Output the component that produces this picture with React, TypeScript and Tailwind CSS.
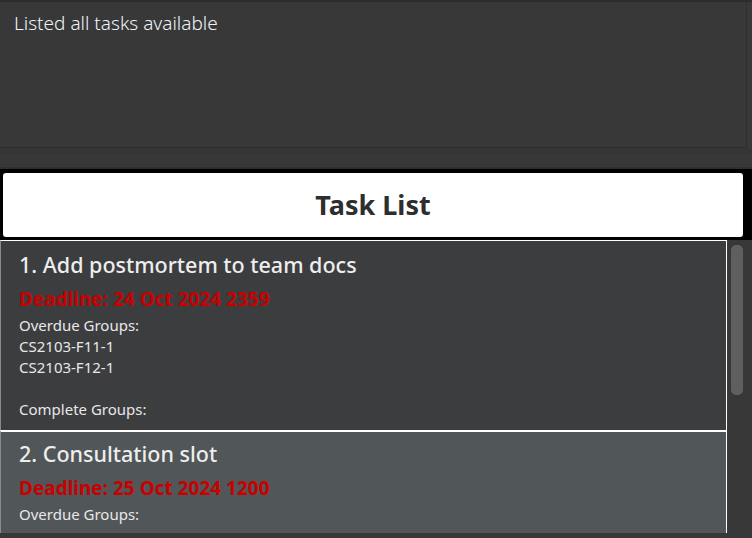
import React from 'react';

interface Task {
  title: string;
  deadline: string;
  overdue: string[];
  complete: string[];
}

const tasks: Task[] = [
  {
    title: '1. Add postmortem to team docs',
    deadline: 'Deadline: 24 Oct 2024 2359',
    overdue: ['CS2103-F11-1', 'CS2103-F12-1'],
    complete: [],
  },
  {
    title: '2. Consultation slot',
    deadline: 'Deadline: 25 Oct 2024 1200',
    overdue: [],
    complete: [],
  },
];

const font = { fontFamily: '"Noto Sans", "Open Sans", sans-serif' };

const TaskCard: React.FC<{ task: Task; odd: boolean }> = ({ task, odd }) => (
  <div
    className={
      odd
        ? 'h-[190px] shrink-0 overflow-hidden border-t border-r border-l border-white border-l-[#8a8a8a] bg-[#3c3d3f] pl-[18px] pt-[9px]'
        : 'h-[190px] shrink-0 overflow-hidden border-t-2 border-r border-l border-white border-l-[#8a8a8a] bg-[#515658] pl-[18px] pt-[7px]'
    }
  >
    <div className="text-[21.5px] font-medium leading-[30px] text-[#eeeeee]">{task.title}</div>
    <div className="pt-[4px] text-[19px] font-bold leading-[30px] text-[#c90000]">{task.deadline}</div>
    <div className="text-[15px] leading-[21px] text-[#e8e8e8]">
      <div className="pt-[1px]">Overdue Groups:</div>
      {task.overdue.map((g) => (
        <div key={g}>{g}</div>
      ))}
      <div className="h-[21px]" />
      <div>Complete Groups:</div>
    </div>
  </div>
);

export default function App() {
  return (
    <div className="flex h-[538px] w-[752px] flex-col overflow-hidden bg-[#383838]" style={font}>
      {/* result display */}
      <div className="h-[148px] shrink-0 border-t-2 border-[#2c2c2c] pr-[5px]">
        <div className="h-full border-r border-b border-[#2e2e2e] px-[14px] pt-[7px] text-[19px] font-light leading-[28px] text-[#eef4f8]">
          Listed all tasks available
        </div>
      </div>
      <div className="h-[21px] shrink-0 border-t-[6px] border-b-2 border-t-[#353535] border-b-[#2f2f2f] bg-[#383838]" />

      {/* task list header */}
      <div className="shrink-0 bg-black pt-[4px] pr-[9px] pb-[3px] pl-[3px]">
        <div className="flex h-[64px] items-center justify-center rounded-[3px] bg-white text-[27px] font-bold text-[#2e2e2e]">
          Task List
        </div>
      </div>

      {/* task list */}
      <div className="flex h-[293px] shrink-0 overflow-hidden">
        <div className="flex w-[727px] shrink-0 flex-col">
          {tasks.map((t, i) => (
            <TaskCard key={t.title} task={t} odd={i % 2 === 0} />
          ))}
        </div>
        <div className="flex-1 bg-[#383838] pt-[5px] pl-[4px]">
          <div className="h-[150px] w-[12px] rounded-[5px] bg-[#5f5f5f]" />
        </div>
      </div>
    </div>
  );
}
